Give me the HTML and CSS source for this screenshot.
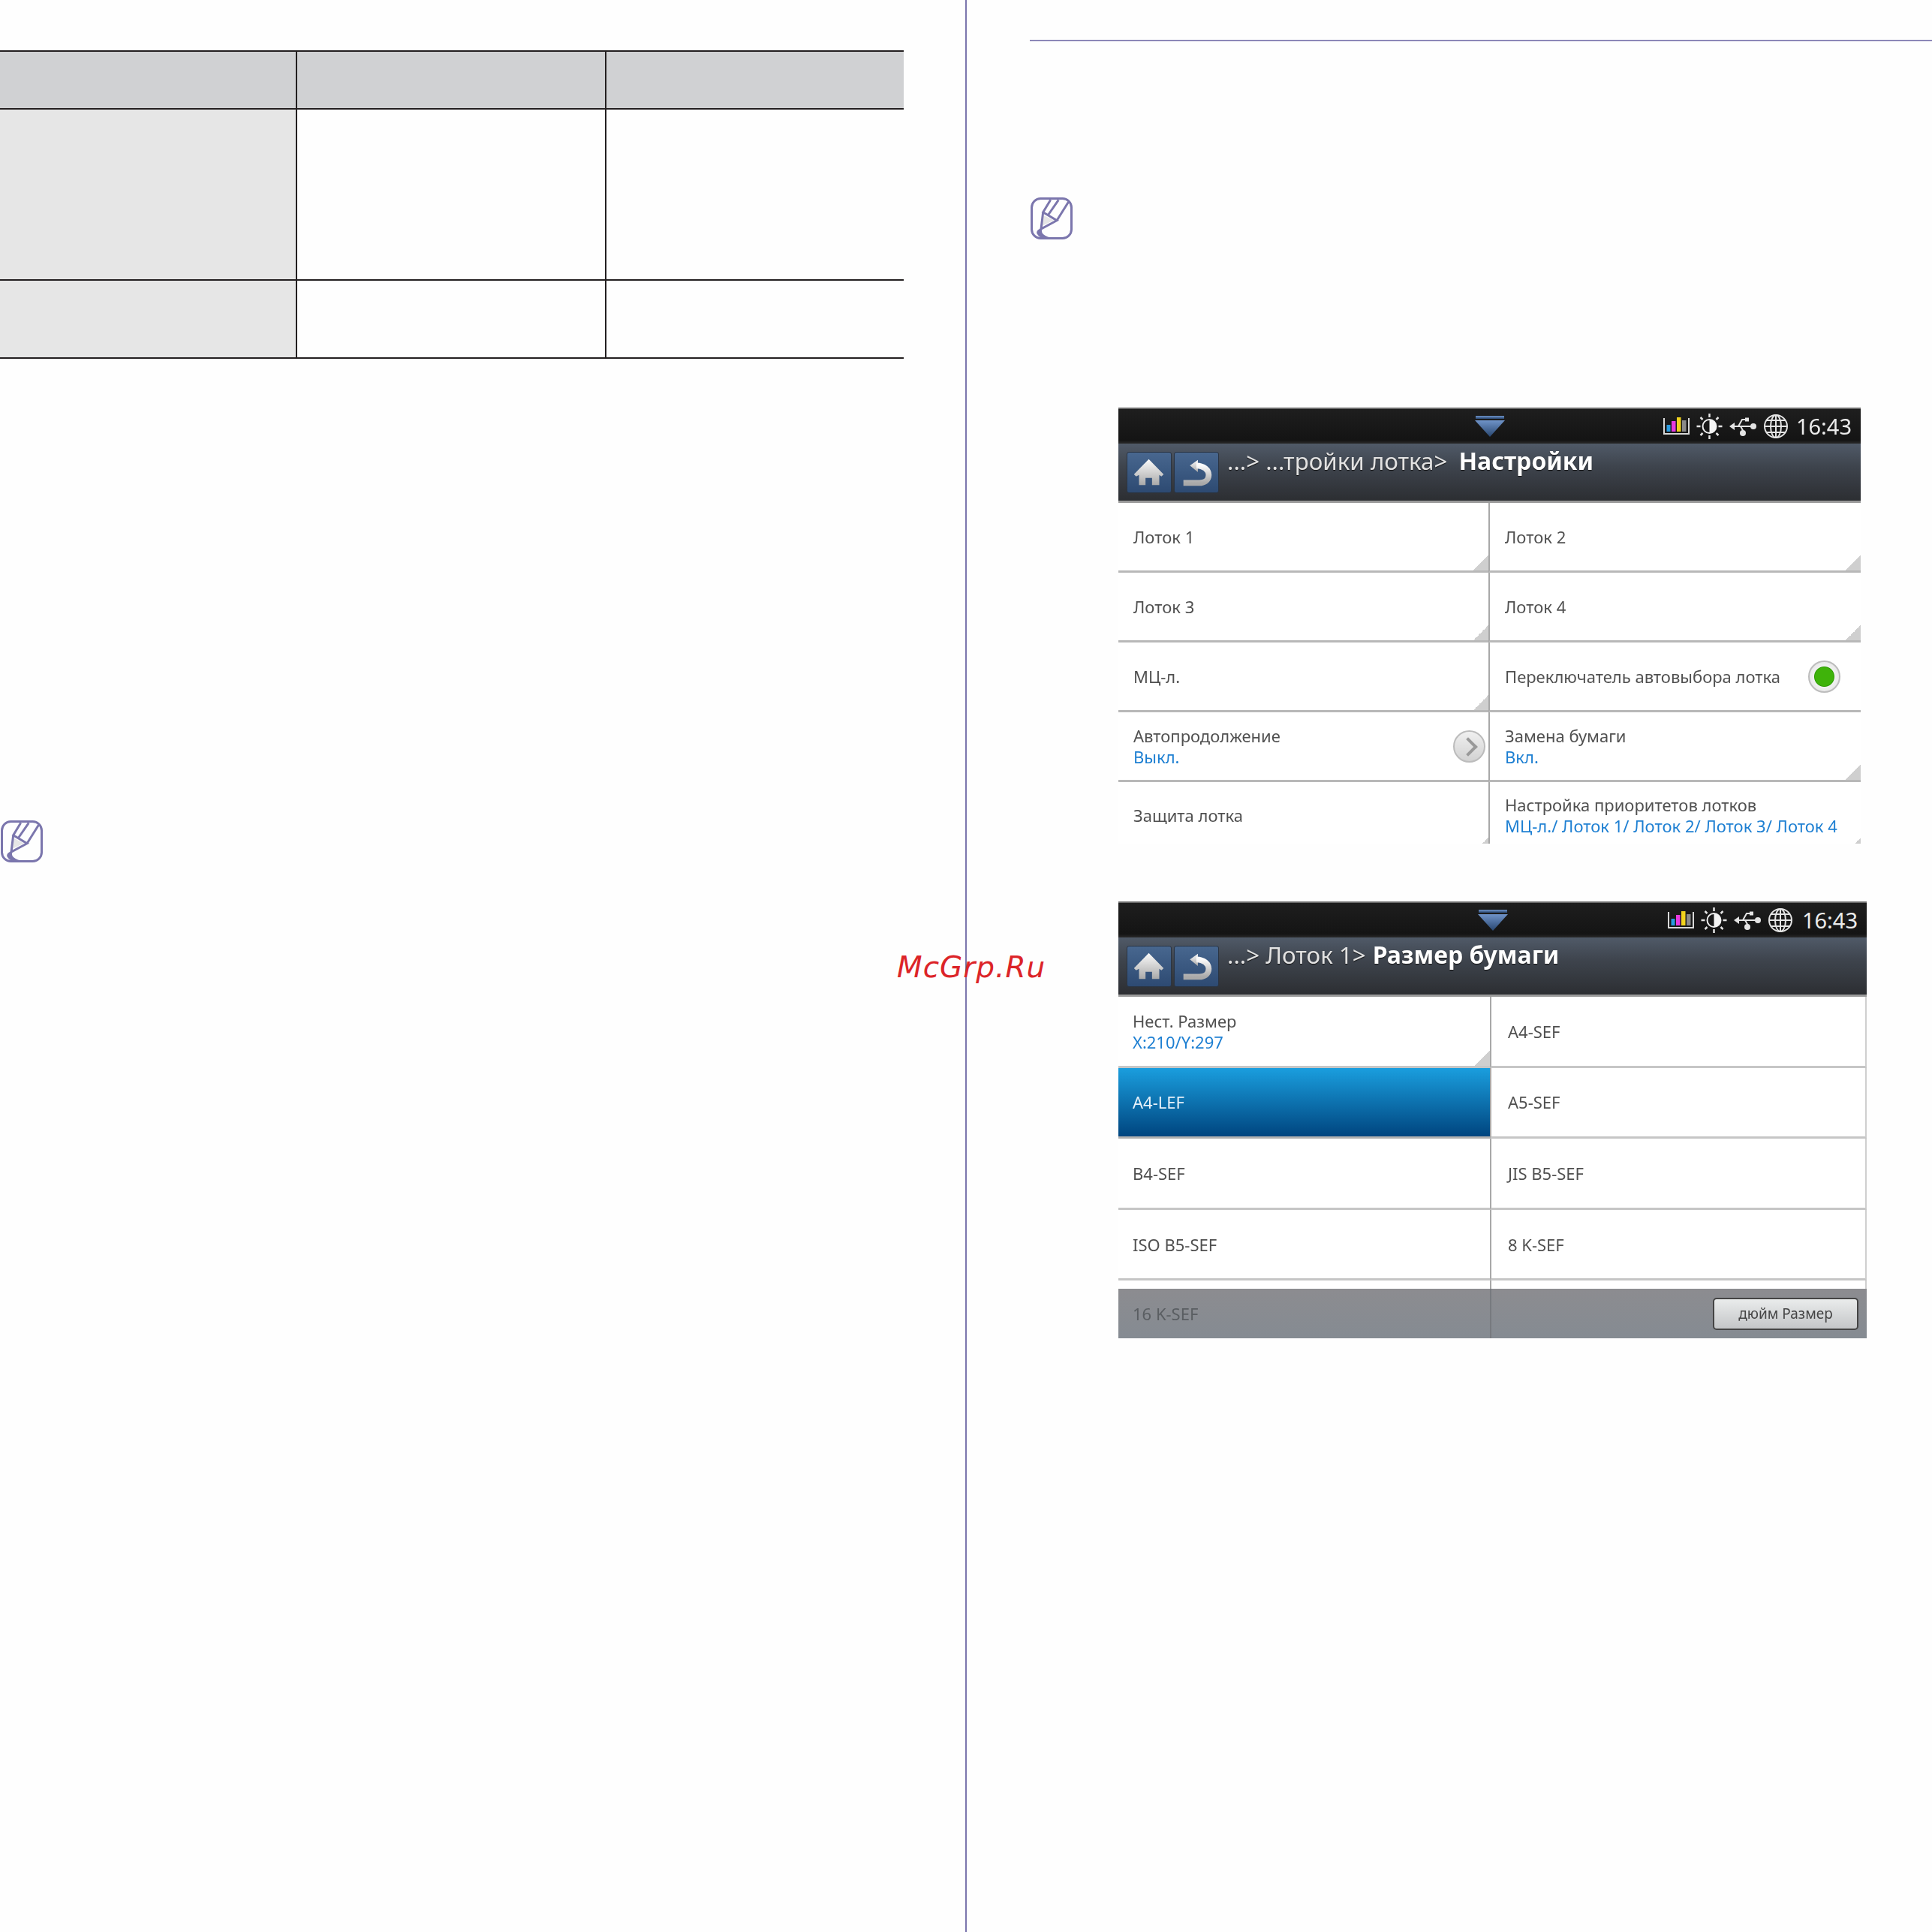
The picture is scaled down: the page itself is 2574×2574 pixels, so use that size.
FILE: index.html
```html
<!DOCTYPE html>
<html lang="ru">
<head>
<meta charset="utf-8">
<title>Настройки лотка</title>
<link rel="stylesheet" href="styles.css">
</head>
<body>
<svg class="defs" width="0" height="0" aria-hidden="true">
  <defs>
    <linearGradient id="glyph" x1="0" y1="0" x2="0" y2="1"><stop offset="0" stop-color="#fbfbfb"/><stop offset="1" stop-color="#a9a9a9"/></linearGradient>
    <linearGradient id="chev" x1="0" y1="0" x2="0" y2="1"><stop offset="0" stop-color="#6f93c8"/><stop offset="1" stop-color="#28466f"/></linearGradient>
    <symbol id="note" viewBox="0 0 56 56">
      <rect x="1.5" y="1.5" width="53" height="53" rx="12" fill="none" stroke="#7b76ad" stroke-width="3"/>
      <polygon points="17.5,24 31,30.5 15,38" fill="#e6e6e6"/>
      <path d="M26.7 3.3 16.7 19.7 35 30.7 14 42 16.7 19.7M37.3 3.3 23 24M50.7 5.7 35 30.7" fill="none" stroke="#7b76ad" stroke-width="3"/>
      <path d="M14 41C9 43 7 46 9 49 10.500 52 14 54 18 55H32C23 53 14 50 15 44Z" fill="#7b76ad"/>
    </symbol>
    <symbol id="home" viewBox="0 0 60 55">
      <path d="M29.500 9 50 30 47 33 44 31V45H34V35H25V45H16V31L12 33 9 30Z" fill="url(#glyph)"/>
    </symbol>
    <symbol id="back" viewBox="0 0 60 55">
      <path d="M21 18 32 10V27Z" fill="url(#glyph)"/>
      <path d="M30 18C40 18 47 24 47 31 47 39 40 42 34 42H12" fill="none" stroke="url(#glyph)" stroke-width="8"/>
    </symbol>
    <symbol id="down" viewBox="0 0 40 28">
      <rect x="1" y="0" width="38" height="4" fill="url(#chev)"/>
      <polygon points="0,6 40,6 20,28" fill="url(#chev)"/>
    </symbol>
    <symbol id="ink" viewBox="0 0 35 26">
      <path d="M1 2V23H34V2" fill="none" stroke="#d8d8d8" stroke-width="2"/>
      <rect x="4.500" y="11" width="5" height="9" fill="#2a9be0"/>
      <rect x="11" y="6" width="5.500" height="14" fill="#e83ae0"/>
      <rect x="18" y="1" width="5.500" height="19" fill="#f2d31e"/>
      <rect x="25" y="5" width="5.500" height="15" fill="#8a8a8a"/>
    </symbol>
    <symbol id="sun" viewBox="0 0 36 36">
      <circle cx="18" cy="18" r="9" fill="none" stroke="#eee" stroke-width="2"/>
      <path d="M18 9A9 9 0 0 1 18 27Z" fill="#f4f4f4"/>
      <path d="M18 1V6M18 30V35M1 18H6M30 18H35M6 6 9 9M27 27 30 30M6 30 9 27M27 9 30 6" stroke="#e4e4e4" stroke-width="2.500" fill="none"/>
    </symbol>
    <symbol id="usb" viewBox="0 0 37 26">
      <path d="M5 13H31M12 13 17 4H22M15 13 20 22" fill="none" stroke="#e4e4e4" stroke-width="2"/>
      <path d="M0 13 7 8V18Z" fill="#e4e4e4"/>
      <circle cx="32" cy="13" r="4" fill="#e4e4e4"/>
      <circle cx="18" cy="22" r="4" fill="#e4e4e4"/>
      <rect x="21" y="1.500" width="5" height="5" fill="#e4e4e4"/>
    </symbol>
    <symbol id="globe" viewBox="0 0 34 34">
      <g fill="none" stroke="#e4e4e4" stroke-width="2">
        <circle cx="17" cy="17" r="15"/>
        <ellipse cx="17" cy="17" rx="7" ry="15"/>
        <path d="M17 2V32M2 17H32M5 9H29M5 25H29"/>
      </g>
    </symbol>
  </defs>
</svg>

<div class="page">
  <main class="col-left">
    <div class="spec-table">
      <div class="cell head"></div><div class="cell head mid"></div><div class="cell head mid"></div>
      <div class="cell key"></div><div class="cell mid"></div><div class="cell mid"></div>
      <div class="cell key"></div><div class="cell mid"></div><div class="cell mid"></div>
    </div>
    <svg class="note note-left"><use href="#note"/></svg>
  </main>

  <section class="col-right">
    <div class="rule"></div>
    <svg class="note note-right"><use href="#note"/></svg>

    <div class="screen screen-one">
      <div class="status">
        <span></span>
        <svg class="down"><use href="#down"/></svg>
        <div class="status-right">
          <svg class="s-ink"><use href="#ink"/></svg>
          <svg class="s-sun"><use href="#sun"/></svg>
          <svg class="s-usb"><use href="#usb"/></svg>
          <svg class="s-globe"><use href="#globe"/></svg>
          <span class="clock">16:43</span>
        </div>
      </div>
      <div class="title">
        <button class="nav"><svg><use href="#home"/></svg></button>
        <button class="nav"><svg><use href="#back"/></svg></button>
        <div class="crumb">...&gt; ...тройки лотка&gt;<b>Настройки</b></div>
      </div>
      <div class="grid">
        <div class="item corner"><span>Лоток 1</span></div>
        <div class="item corner"><span>Лоток 2</span></div>
        <div class="item corner"><span>Лоток 3</span></div>
        <div class="item corner"><span>Лоток 4</span></div>
        <div class="item corner"><span>МЦ-л.</span></div>
        <div class="item"><span>Переключатель автовыбора лотка</span><i class="radio"></i></div>
        <div class="item"><span>Автопродолжение<em>Выкл.</em></span><i class="more"></i></div>
        <div class="item corner"><span>Замена бумаги<em>Вкл.</em></span></div>
        <div class="item last corner-cut"><span>Защита лотка</span></div>
        <div class="item last corner-cut"><span>Настройка приоритетов лотков<em>МЦ-л./ Лоток 1/ Лоток 2/ Лоток 3/ Лоток 4</em></span></div>
      </div>
    </div>

    <div class="screen screen-two">
      <div class="status">
        <span></span>
        <svg class="down"><use href="#down"/></svg>
        <div class="status-right">
          <svg class="s-ink"><use href="#ink"/></svg>
          <svg class="s-sun"><use href="#sun"/></svg>
          <svg class="s-usb"><use href="#usb"/></svg>
          <svg class="s-globe"><use href="#globe"/></svg>
          <span class="clock">16:43</span>
        </div>
      </div>
      <div class="title">
        <button class="nav"><svg><use href="#home"/></svg></button>
        <button class="nav"><svg><use href="#back"/></svg></button>
        <div class="crumb">...&gt; Лоток 1&gt;<b>Размер бумаги</b></div>
      </div>
      <div class="grid">
        <div class="item corner"><span>Нест. Размер<em>X:210/Y:297</em></span></div>
        <div class="item"><span>A4-SEF</span></div>
        <div class="item active"><span>A4-LEF</span></div>
        <div class="item"><span>A5-SEF</span></div>
        <div class="item"><span>B4-SEF</span></div>
        <div class="item"><span>JIS B5-SEF</span></div>
        <div class="item"><span>ISO B5-SEF</span></div>
        <div class="item"><span>8 K-SEF</span></div>
        <div class="gap"></div><div class="gap"></div>
        <div class="foot"><span>16 K-SEF</span></div>
        <div class="foot foot-end"><button class="inch">дюйм Размер</button></div>
      </div>
    </div>
  </section>
</div>

<div class="watermark">McGrp.Ru</div>
</body>
</html>
```

FILE: styles.css
```css
* { box-sizing: border-box; }
html, body { margin: 0; padding: 0; background: #fefefe; }
.defs { display: block; height: 0; }

.page { display: flex; width: 2574px; height: 2574px; overflow: hidden; }

.col-left {
  width: 1288px;
  flex: none;
  padding-top: 67px;
  border-right: 2px solid #7b76ad;
}
.spec-table {
  display: grid;
  grid-template-columns: 394px 412px 398px;
  grid-template-rows: 77px 228px 104px;
  width: 1204px;
  border-bottom: 2px solid #231f20;
}
.cell { border-top: 2px solid #231f20; background: #fefefe; }
.cell.mid { border-left: 2px solid #231f20; }
.cell.head { background: #d0d1d3; }
.cell.key { background: #e6e6e6; }

.note { display: block; width: 56px; height: 56px; }
.note-left { margin: 615px 0 0 1px; }

.col-right { flex: 1; padding: 53px 0 0 84px; }
.rule { height: 2px; background: #8c88b8; }
.note-right { margin: 208px 0 0 1px; }

.screen {
  margin-left: 118px;
  font-family: "Noto Sans", "Open Sans", sans-serif;
  filter: blur(0.6px);
}
.screen-one { width: 989px; margin-top: 224px; }
.screen-two { width: 997px; margin-top: 77px; }

.status {
  display: grid;
  grid-template-columns: 1fr auto 1fr;
  align-items: center;
  height: 48px;
  background: linear-gradient(#1e1e1e, #141414 90%, #2a2a2a);
  border-top: 2px solid #6a6a6a;
}
.down { width: 40px; height: 28px; display: block; }
.status-right { display: flex; justify-content: flex-end; align-items: center; gap: 8px; padding-right: 12px; }
.s-ink { width: 35px; height: 26px; }
.s-sun { width: 37px; height: 36px; }
.s-usb { width: 37px; height: 26px; }
.s-globe { width: 34px; height: 34px; }
.clock { color: #ebebeb; font-size: 29px; margin-left: 2px; line-height: 36px; }
.screen-two .clock { margin-left: 4px; }

.title {
  display: flex;
  align-items: flex-start;
  gap: 3px;
  height: 79px;
  padding: 11px 0 0 11px;
  background: linear-gradient(#505a68, #3e444d 40%, #2c2e32);
  border-bottom: 3px solid #9a9a9a;
}
.nav {
  width: 60px;
  height: 55px;
  padding: 0;
  border: 1px solid #2a3442;
  border-radius: 3px;
  background: linear-gradient(#48678f, #2d4a72);
}
.nav svg { display: block; width: 58px; height: 53px; }
.crumb {
  margin: -10px 0 0 8px;
  color: #e2e2e2;
  font-size: 31.3px;
  line-height: 44px;
  white-space: nowrap;
  text-shadow: 0 1px 1px #111;
}
.crumb b { color: #fff; margin-left: 15px; font-size: 32px; font-weight: 700; }
.screen-two .crumb b { margin-left: 9px; }

.grid { display: grid; background: #fff; }
.screen-one .grid { grid-template-columns: 493px 1fr; grid-template-rows: repeat(4, 93px) 82px; }
.screen-two .grid { grid-template-columns: 495px 1fr; grid-template-rows: repeat(4, 94.6px) 11px 66px; }

.item {
  display: flex;
  align-items: center;
  justify-content: space-between;
  padding-left: 20px;
  border-bottom: 3px solid #b8b8b8;
  color: #505050;
  font-size: 22px;
  line-height: 28px;
  background: #fff;
}
.item:nth-child(even) { border-left: 2px solid #a8a8a8; padding-left: 20px; }
.item span { white-space: nowrap; }
.item em { display: block; font-style: normal; color: #1d7fd2; }
.item.corner {
  background: linear-gradient(135deg, transparent 50%, #cfcfcf 50%) right bottom / 20px 20px no-repeat, #fff;
}
.item.corner-cut {
  background: linear-gradient(135deg, transparent 50%, #cfcfcf 50%) right bottom -12px / 20px 20px no-repeat, #fff;
}
.screen-one .item.last { padding-top: 5px; border-bottom: 0; }

.radio {
  width: 43px; height: 43px; margin-right: 27px;
  border-radius: 50%;
  border: 2px solid #bdbdbd;
  background: radial-gradient(circle at 50% 50%, #3fb30a 0 12px, #2c9a00 13px, #f1f1f1 14px, #dedede);
}
.more {
  position: relative;
  width: 43px; height: 43px; margin-right: 4px;
  border-radius: 50%;
  border: 2px solid #bcbcbc;
  background: linear-gradient(#f0f0f0, #d2d2d2);
}
.more::after {
  content: "";
  position: absolute;
  left: 9px; top: 11px;
  width: 14px; height: 14px;
  border-top: 4px solid #999;
  border-right: 4px solid #999;
  transform: rotate(45deg);
}

.screen-two .item { padding-left: 19px; border-bottom-color: #c6c6c6; }
.screen-two .item:nth-child(even) { padding-left: 22px; border-right: 2px solid #cfcfcf; }
.item.active {
  color: #e8f2fa;
  border-bottom-color: #b0b0b0;
  background: linear-gradient(#1a9ede, #00457f);
}

.gap { background: #fff; }
.gap:nth-child(even) { border-left: 2px solid #a8a8a8; border-right: 2px solid #cfcfcf; }
.foot {
  display: flex;
  align-items: center;
  padding-left: 19px;
  color: #5a5e62;
  font-size: 22px;
  background: linear-gradient(#8c8c90, #858b92);
}
.foot-end { justify-content: flex-end; padding-right: 11px; border-left: 2px solid #777a7f; }
.inch {
  width: 194px; height: 43px;
  border: 2px solid #444;
  border-radius: 5px;
  background: linear-gradient(#eaecec, #c4c6c8);
  color: #454545;
  font: 19px "Noto Sans", sans-serif;
}

.watermark {
  position: absolute;
  left: 1195px;
  top: 1262px;
  color: #dc2428;
  font-family: "DejaVu Sans", sans-serif;
  font-style: italic;
  font-size: 39px;
  line-height: 54px;
  letter-spacing: 1px;
  white-space: nowrap;
}
```
